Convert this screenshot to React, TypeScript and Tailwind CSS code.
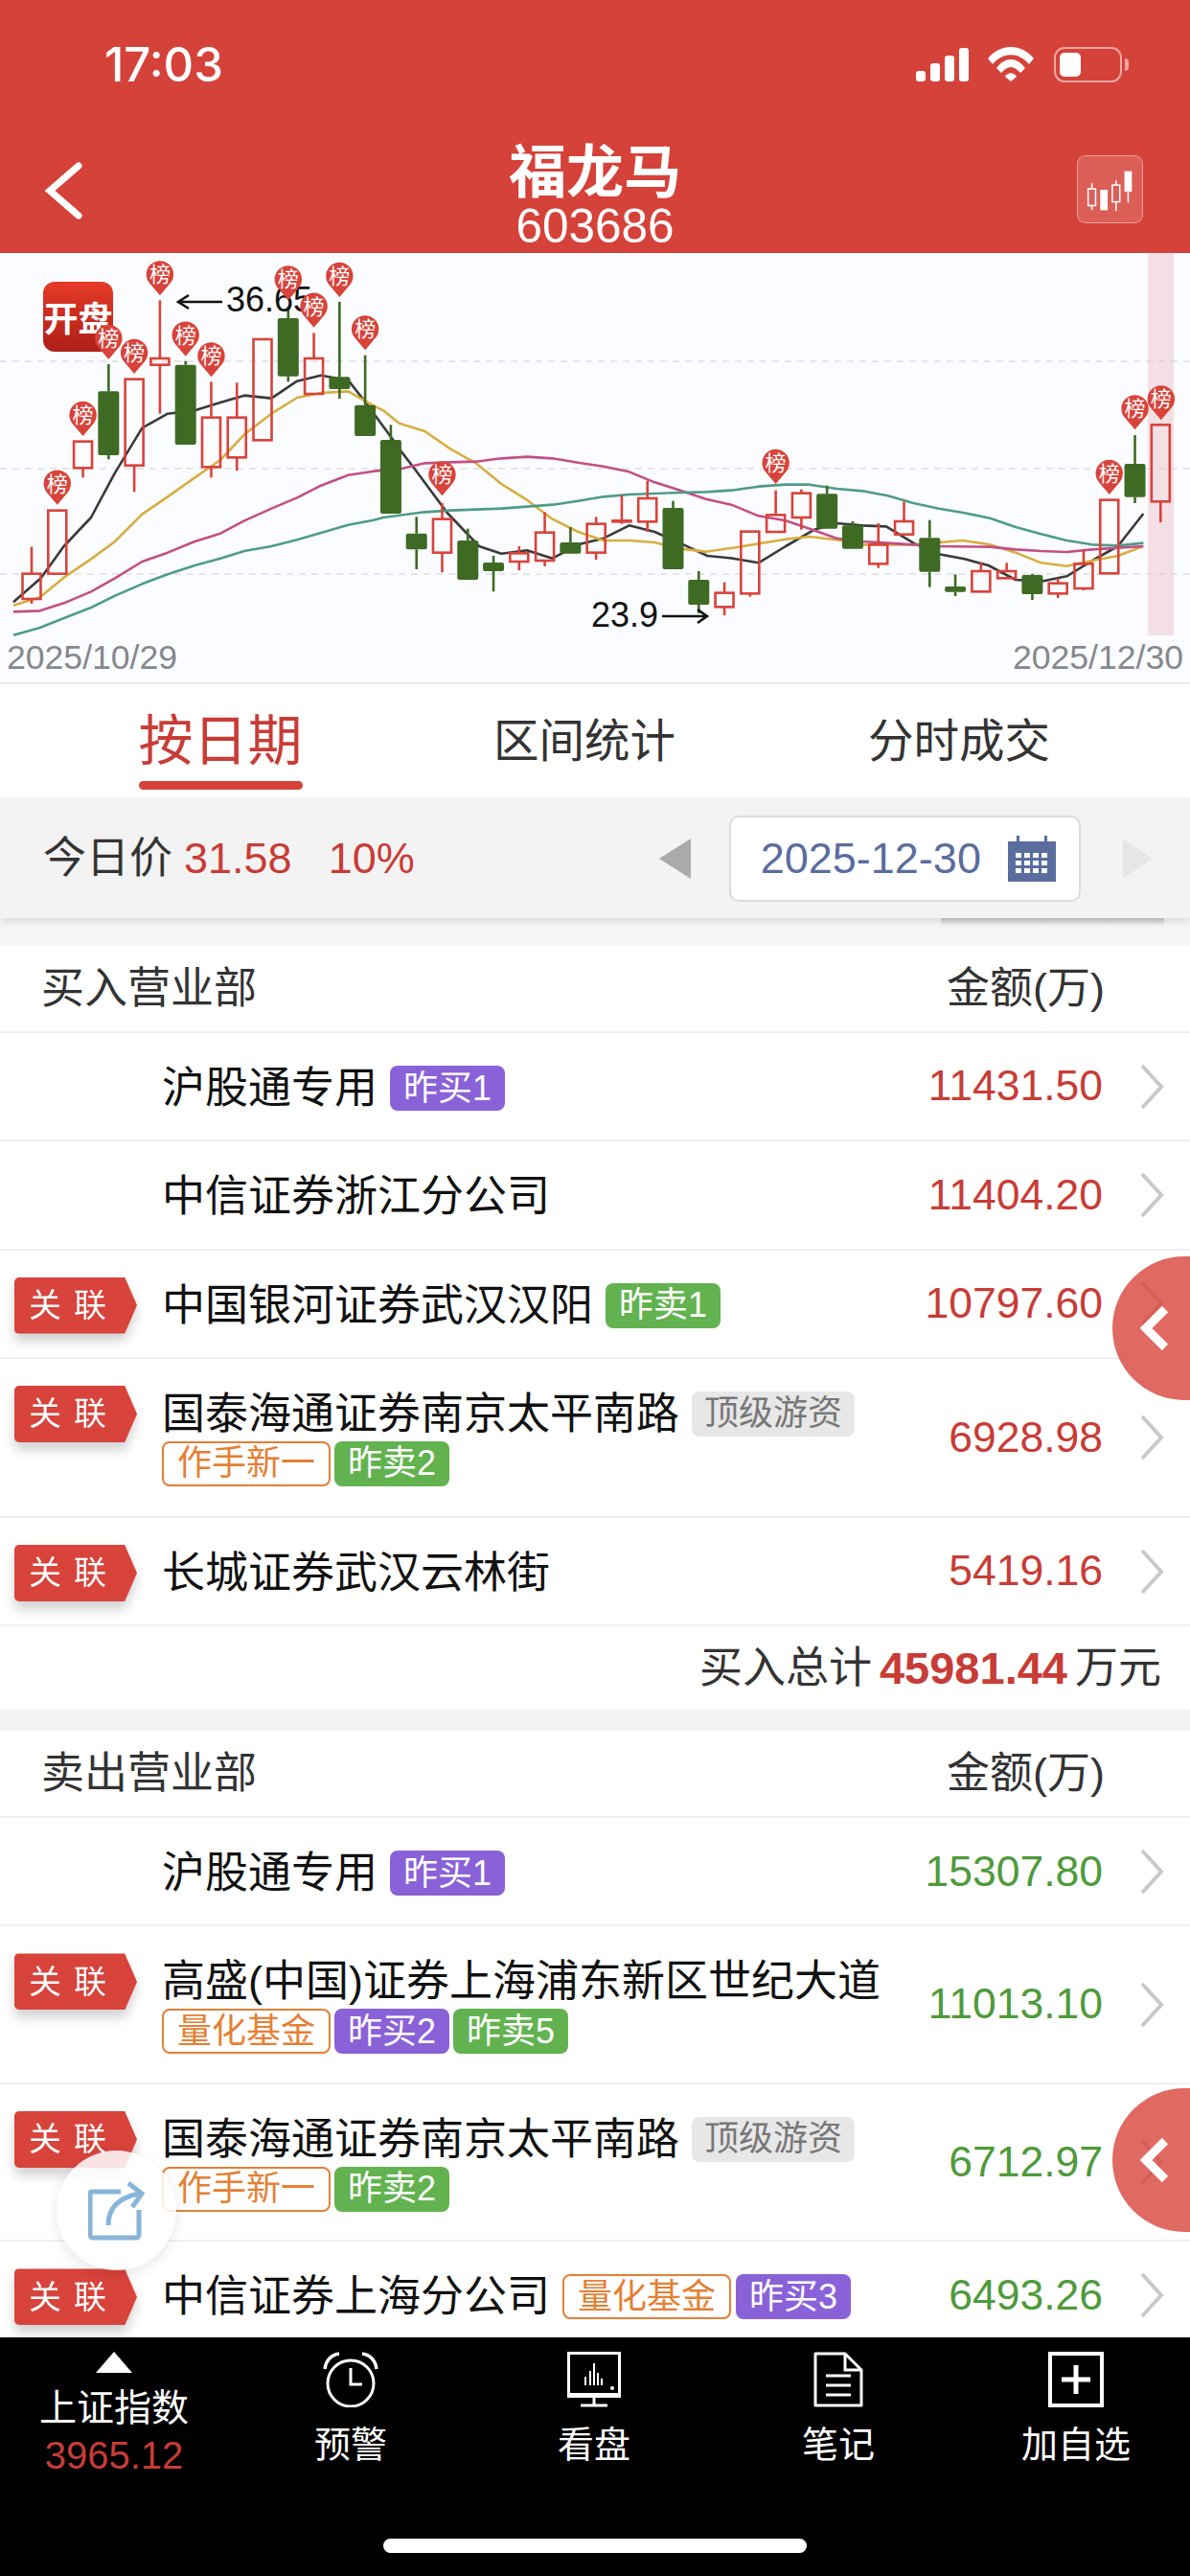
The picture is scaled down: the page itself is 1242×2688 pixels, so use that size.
const RED = "#d8433b";
const GREEN = "#3e6a24";

type Pt = [number, number];
// readings were taken from 3x crops, so x0 is the crop's left edge
const toPts = (x0: number, pts: Pt[]) => pts.map(([x, y]) => `${x0 + x / 3},${260 + y / 3}`).join(" ");

const lines: { color: string; parts: [number, Pt[]][] }[] = [
  {
    color: "#3a3a3a",
    parts: [
      [0, [[42, 1105], [128, 1030], [200, 930], [285, 840], [360, 700], [445, 560], [525, 515], [610, 505], [690, 480], [765, 458], [850, 467], [930, 413], [1005, 395], [1090, 410], [1145, 480], [1222, 585]]],
      [400, [[50, 625], [100, 690], [200, 825], [300, 930], [370, 953], [450, 943], [530, 968], [610, 925], [690, 905], [770, 865], [850, 885], [940, 925], [1015, 960], [1095, 968], [1175, 982]]],
      [820, [[0, 930], [90, 878], [160, 858], [240, 865], [315, 868], [400, 920], [480, 955], [560, 970], [635, 990], [720, 1035], [800, 1040], [880, 1024], [960, 975], [1040, 930], [1120, 828]]],
    ],
  },
  {
    color: "#d7ae3f",
    parts: [
      [0, [[42, 1115], [125, 1090], [200, 1028], [285, 970], [360, 915], [445, 830], [525, 775], [610, 715], [690, 660], [765, 580], [850, 515], [930, 465], [1005, 450], [1090, 445], [1170, 490]]],
      [400, [[0, 505], [50, 545], [130, 570], [210, 625], [290, 670], [370, 735], [450, 785], [530, 845], [610, 885], [690, 912], [770, 912], [850, 918], [930, 938], [1010, 947], [1095, 935], [1175, 922]]],
      [820, [[0, 908], [75, 900], [160, 910], [240, 925], [400, 925], [480, 918], [555, 912], [640, 925], [720, 950], [800, 982], [880, 992], [960, 975], [1040, 960], [1120, 930]]],
    ],
  },
  {
    color: "#c24f86",
    parts: [
      [0, [[42, 1135], [125, 1132], [200, 1108], [285, 1072], [360, 1030], [445, 978], [525, 950], [610, 915], [690, 890], [765, 850], [850, 812], [930, 778], [1005, 740], [1090, 707], [1170, 695]]],
      [400, [[55, 688], [130, 670], [210, 667], [290, 665], [370, 655], [450, 650], [530, 655], [610, 668], [690, 680], [770, 697], [850, 730], [930, 755], [1010, 782], [1090, 800], [1175, 835]]],
      [820, [[0, 850], [75, 875], [160, 905], [240, 915], [320, 920], [400, 925], [480, 930], [640, 932], [720, 940], [800, 945], [880, 948], [960, 940], [1040, 935], [1120, 930]]],
    ],
  },
  {
    color: "#4f9c88",
    parts: [
      [0, [[42, 1208], [125, 1185], [200, 1155], [285, 1122], [360, 1085], [445, 1048], [525, 1018], [610, 990], [690, 968], [765, 945], [850, 930], [930, 910], [1005, 888], [1090, 863], [1170, 848]]],
      [400, [[0, 840], [130, 823], [210, 818], [290, 815], [370, 812], [450, 806], [530, 800], [610, 788], [690, 775], [770, 768], [850, 765], [930, 762], [1010, 760], [1090, 755], [1175, 743]]],
      [820, [[0, 737], [75, 737], [160, 750], [240, 757], [320, 772], [400, 795], [480, 812], [560, 826], [640, 842], [720, 870], [800, 892], [880, 912], [960, 925], [1040, 928], [1120, 920]]],
    ],
  },
];

// up, bodyTop, bodyBottom, wickTop, wickBottom in crop units
const candles: [0 | 1, number, number, number, number][] = [
  [1, 1016, 1095, 932, 1110], [1, 818, 1016, 818, 1016], [1, 602, 685, 602, 715], [0, 445, 645, 360, 658],
  [1, 407, 677, 407, 760], [1, 342, 362, 160, 515], [0, 362, 612, 350, 612], [1, 527, 682, 415, 715],
  [1, 527, 652, 418, 693], [1, 282, 598, 282, 598], [0, 216, 398, 180, 415], [1, 342, 453, 262, 453],
  [0, 400, 438, 165, 468], [0, 488, 585, 332, 585], [0, 597, 828, 550, 828], [0, 890, 940, 838, 1002],
  [1, 845, 950, 795, 1012], [0, 912, 1035, 875, 1035], [0, 981, 1008, 960, 1072], [1, 952, 978, 930, 1005],
  [1, 887, 975, 823, 993], [0, 918, 953, 870, 953], [1, 860, 950, 838, 972], [1, 850, 853, 770, 860],
  [1, 780, 853, 725, 885], [0, 810, 1002, 788, 1002], [0, 1035, 1113, 1008, 1140], [1, 1076, 1120, 1043, 1146],
  [1, 884, 1078, 884, 1088], [1, 832, 885, 755, 885], [1, 764, 840, 752, 878], [0, 766, 875, 740, 875],
  [0, 865, 938, 852, 938], [1, 925, 985, 858, 998], [1, 852, 893, 790, 893], [0, 904, 1010, 848, 1058],
  [0, 1056, 1073, 1018, 1086], [1, 1008, 1072, 980, 1072], [1, 1008, 1030, 982, 1030], [0, 1020, 1080, 1016, 1098],
  [1, 1046, 1078, 1030, 1092], [1, 985, 1062, 940, 1068], [1, 785, 1015, 785, 1015], [0, 672, 776, 582, 795],
  [1, 550, 790, 550, 855],
];

const markers: [number, number][] = [
  [1, 800], [2, 585], [3, 345], [4, 390], [5, 145], [6, 335], [7, 400], [10, 160], [11, 245], [12, 150],
  [13, 316], [16, 772], [29, 735], [42, 768], [43, 565], [44, 535],
];

const cx = (i: number) => 33 + i * 26.78;
const cy = (z: number) => 260 + z / 3;

function KChart() {
  return (
    <svg viewBox="0 264 1242 448" className="block w-full h-[448px] bg-[#fbfcff]">
      <rect x="1198" y="264" width="27" height="399" fill="#f3dfe4" />
      {[377, 489, 599].map((y) => (
        <line key={y} x1="0" x2="1242" y1={y} y2={y} stroke="#cfd0d2" strokeWidth="1.2" strokeDasharray="7 6" />
      ))}
      {lines.map((l) => (
        <polyline
          key={l.color}
          points={l.parts.map(([x0, pts]) => toPts(x0, pts)).join(" ")}
          fill="none"
          stroke={l.color}
          strokeWidth="2.6"
          strokeLinejoin="round"
        />
      ))}
      {candles.map(([up, top, bottom, wickTop, wickBottom], i) => {
        const x = cx(i);
        const color = up ? RED : GREEN;
        return (
          <g key={i}>
            <line x1={x} x2={x} y1={cy(wickTop)} y2={cy(top)} stroke={color} strokeWidth="2.6" />
            <line x1={x} x2={x} y1={cy(bottom)} y2={cy(wickBottom)} stroke={color} strokeWidth="2.6" />
            {up ? (
              <rect x={x - 9.5} y={cy(top)} width="19" height={Math.max(cy(bottom) - cy(top), 1)} fill="none" stroke={color} strokeWidth="2.6" />
            ) : (
              <rect x={x - 11} y={cy(top)} width="22" height={cy(bottom) - cy(top)} rx="2" fill={color} />
            )}
          </g>
        );
      })}
      <defs>
        <linearGradient id="kaipan" x1="0" y1="0" x2="0" y2="1">
          <stop offset="0" stopColor="#e63a27" />
          <stop offset="1" stopColor="#ad1f18" />
        </linearGradient>
      </defs>
      <rect x="45" y="294" width="73" height="73" rx="12" fill="url(#kaipan)" />
      <text x="81.5" y="346" textAnchor="middle" fontSize="36" fontWeight="700" fill="#fff" fontFamily="'Noto Sans CJK SC',sans-serif">
        开盘
      </text>
      <text x="236" y="325" fontSize="36" fill="#111" fontFamily="'Liberation Sans',sans-serif">36.65</text>
      <path d="M232 315H186M197 308l-11 7 11 7" fill="none" stroke="#111" strokeWidth="2.6" />
      <text x="617" y="654" fontSize="36" fill="#111" fontFamily="'Liberation Sans',sans-serif">23.9</text>
      <path d="M691 643H738M728 636l10 7-10 7" fill="none" stroke="#111" strokeWidth="2.6" />
      {markers.map(([i, tip]) => {
        const x = cx(i) + (i === 44 ? 0.5 : 0);
        const y = cy(tip);
        return (
          <g key={i}>
            <path d={`M${x} ${y}L${x - 11} ${y - 13}A14.2 14.2 0 1 1 ${x + 11} ${y - 13}Z`} fill={RED} />
            <text x={x} y={y - 14} textAnchor="middle" fontSize="22" fill="#fff" fontFamily="'Noto Sans CJK SC',sans-serif">
              榜
            </text>
          </g>
        );
      })}
      <text x="7" y="698" fontSize="35.6" fill="#85888c" fontFamily="'Liberation Sans',sans-serif">2025/10/29</text>
      <text x="1235" y="698" textAnchor="end" fontSize="35.6" fill="#85888c" fontFamily="'Liberation Sans',sans-serif">2025/12/30</text>
    </svg>
  );
}

function StatusIcons() {
  return (
    <div className="flex items-center">
      <svg width="56" height="35" viewBox="0 0 56 35" fill="#fff">
        <rect x="0" y="24" width="10" height="11" rx="3" />
        <rect x="15" y="16" width="10" height="19" rx="3" />
        <rect x="30" y="8" width="10" height="27" rx="3" />
        <rect x="45" y="0" width="10" height="35" rx="3" />
      </svg>
      <svg width="48" height="36" viewBox="0 0 48 36" fill="#fff" className="ml-[19px]">
        <path d="M0 12C13-4 35-4 48 12L43 18C32 5 16 5 5 18Z" />
        <path d="M9 22C18 10 30 10 39 22L34 27C27 19 21 19 14 27Z" />
        <path d="M18 31C21 26 27 26 30 31L24 36Z" />
      </svg>
      <div className="ml-[21px] flex items-center">
        <div className="w-[71px] h-[37px] rounded-[11px] border-2 border-[#f0a8a3] p-[4px]">
          <div className="w-[22px] h-full rounded-[5px] bg-white" />
        </div>
        <div className="ml-[3px] w-[4px] h-[13px] rounded-r-full bg-[#f0a8a3]" />
      </div>
    </div>
  );
}

function CandleIcon() {
  return (
    <svg width="69" height="71" viewBox="0 0 69 71" className="bg-white/15 rounded-[9px] border border-white/40">
      <g stroke="#fff" strokeWidth="1.6" fill="none">
        <path d="M15 29V35M15 53V58M41 26V31M41 49V59M54 20V38M54 38V50" />
        <rect x="11" y="35" width="8" height="18" />
        <rect x="37" y="31" width="8" height="18" />
      </g>
      <rect x="24" y="36" width="8" height="22" fill="#fff" />
      <rect x="50" y="16" width="8" height="22" fill="#fff" />
    </svg>
  );
}

type Tag = { text: string; kind: "purple" | "green" | "gray" | "orange" };

const tagClass = {
  purple: "bg-[#8a62d8] text-white px-[14px]",
  green: "bg-[#62b350] text-white px-[14px]",
  gray: "bg-[#e7e7e7] text-[#777] px-[13px]",
  orange: "border-2 border-[#e57f34] text-[#e57f34] px-[14px]",
};

function Chip({ text, kind }: Tag) {
  return (
    <span className={`inline-flex items-center justify-center h-[47px] rounded-[8px] text-[36px] leading-none whitespace-nowrap shrink-0 ${tagClass[kind]}`}>
      {text}
    </span>
  );
}

function GuanlianBadge() {
  return (
    <div className="drop-shadow-[0_8px_6px_rgba(0,0,0,0.18)]">
      <div className="flex items-center gap-[13px] w-[128px] h-[59px] pl-[15px] bg-[#d8433b] rounded-l-[5px] text-white text-[34px] leading-none [clip-path:polygon(0_0,90%_0,100%_50%,90%_100%,0_100%)]">
        <span>关</span>
        <span>联</span>
      </div>
    </div>
  );
}

type Row = { name: string; linked?: boolean; first?: Tag[]; second?: Tag[]; amount: string };

function ListRow({ row, color, dense }: { row: Row; color: string; dense?: boolean }) {
  const height = !row.second ? "h-[113.3px]" : dense ? "h-[164.5px]" : "h-[166px]";
  return (
    <div className={`flex border-b-2 border-[#f0f0f0] bg-white ${height}`}>
      <div className="w-[169px] shrink-0 pl-[15px] pt-[28px]">{row.linked && <GuanlianBadge />}</div>
      <div className="flex-1 min-w-0 pt-[29px]">
        <div className="flex items-center h-[57px]">
          <span className="text-[45px] leading-none text-[#111] whitespace-nowrap">{row.name}</span>
          {row.first && (
            <div className="flex gap-[5px] ml-[13px]">
              {row.first.map((t) => (
                <Chip key={t.text} {...t} />
              ))}
            </div>
          )}
        </div>
        {row.second && (
          <div className="flex gap-[4px]">
            {row.second.map((t) => (
              <Chip key={t.text} {...t} />
            ))}
          </div>
        )}
      </div>
      <div className="self-center text-[44.5px] leading-none" style={{ color }}>
        {row.amount}
      </div>
      <svg width="26" height="48" viewBox="0 0 26 48" className="self-center ml-[38px] mr-[27px] shrink-0" fill="none" stroke="#c9c9c9" strokeWidth="4">
        <path d="M3 2L23 24L3 46" />
      </svg>
    </div>
  );
}

const buyRows: Row[] = [
  { name: "沪股通专用", first: [{ text: "昨买1", kind: "purple" }], amount: "11431.50" },
  { name: "中信证券浙江分公司", amount: "11404.20" },
  { name: "中国银河证券武汉汉阳", linked: true, first: [{ text: "昨卖1", kind: "green" }], amount: "10797.60" },
  {
    name: "国泰海通证券南京太平南路",
    linked: true,
    first: [{ text: "顶级游资", kind: "gray" }],
    second: [{ text: "作手新一", kind: "orange" }, { text: "昨卖2", kind: "green" }],
    amount: "6928.98",
  },
  { name: "长城证券武汉云林街", linked: true, amount: "5419.16" },
];

const sellRows: Row[] = [
  { name: "沪股通专用", first: [{ text: "昨买1", kind: "purple" }], amount: "15307.80" },
  {
    name: "高盛(中国)证券上海浦东新区世纪大道",
    linked: true,
    second: [{ text: "量化基金", kind: "orange" }, { text: "昨买2", kind: "purple" }, { text: "昨卖5", kind: "green" }],
    amount: "11013.10",
  },
  {
    name: "国泰海通证券南京太平南路",
    linked: true,
    first: [{ text: "顶级游资", kind: "gray" }],
    second: [{ text: "作手新一", kind: "orange" }, { text: "昨卖2", kind: "green" }],
    amount: "6712.97",
  },
  {
    name: "中信证券上海分公司",
    linked: true,
    first: [{ text: "量化基金", kind: "orange" }, { text: "昨买3", kind: "purple" }],
    amount: "6493.26",
  },
];

function SectionHead({ title }: { title: string }) {
  return (
    <div className="flex items-center justify-between h-[91px] pl-[43px] pr-[89px] bg-white border-b-2 border-[#f0f0f0] text-[45px] leading-none text-[#333]">
      <span>{title}</span>
      <span>金额(万)</span>
    </div>
  );
}

function SideTab({ className }: { className: string }) {
  return (
    <div className={`absolute right-0 w-[81px] h-[150px] rounded-l-full bg-[#d8433b]/80 flex items-center ${className}`}>
      <svg width="32" height="46" viewBox="0 0 32 46" className="ml-[27px]" fill="none" stroke="#fff" strokeWidth="9">
        <path d="M28 3L8 23L28 43" />
      </svg>
    </div>
  );
}

function AlarmIcon() {
  return (
    <svg width="58" height="58" viewBox="0 0 58 58" fill="none" stroke="#fff" strokeWidth="3">
      <circle cx="29" cy="33" r="24" />
      <path d="M29 17V34H41" />
      <path d="M2 18C3 9 9 3 17 2M56 18C55 9 49 3 41 2" strokeWidth="3.5" />
    </svg>
  );
}

function ScreenIcon() {
  return (
    <svg width="56" height="58" viewBox="0 0 56 58" fill="none" stroke="#fff">
      <rect x="1.5" y="1.5" width="53" height="44" strokeWidth="3" />
      <path d="M0 43H56V48H0Z" fill="#fff" stroke="none" />
      <path d="M28 48V55M14 56H42" strokeWidth="3" />
      <path d="M19 35V26M24 35V20M28 35V12M32 35V22M36 35V28" strokeWidth="2" />
      <circle cx="47" cy="38" r="2" fill="#fff" stroke="none" />
    </svg>
  );
}

function NoteIcon() {
  return (
    <svg width="52" height="58" viewBox="0 0 52 58" fill="none" stroke="#fff" strokeWidth="3">
      <path d="M2 2H33L50 19V56H2Z" strokeLinejoin="round" />
      <path d="M33 2V19H50" />
      <path d="M13 25H39M13 35H39M13 45H39" />
    </svg>
  );
}

function PlusIcon() {
  return (
    <svg width="58" height="58" viewBox="0 0 58 58" fill="none" stroke="#fff">
      <rect x="2" y="2" width="54" height="54" strokeWidth="4" />
      <path d="M29 14V44M14 29H44" strokeWidth="5" />
    </svg>
  );
}

const tools = [
  { label: "预警", left: "ml-[130px]", width: "w-[78px]", icon: <AlarmIcon /> },
  { label: "看盘", left: "ml-[176px]", width: "w-[78px]", icon: <ScreenIcon /> },
  { label: "笔记", left: "ml-[177px]", width: "w-[78px]", icon: <NoteIcon /> },
  { label: "加自选", left: "ml-[152px]", width: "w-[114px]", icon: <PlusIcon /> },
];

export default function App() {
  return (
    <div className="relative flex flex-col w-[1242px] h-[2688px] overflow-hidden bg-white font-['Liberation_Sans','Noto_Sans_CJK_SC',sans-serif]">
      {/* header */}
      <div className="h-[264px] shrink-0 bg-[#d5423a] text-white">
        <div className="flex items-center justify-between h-[136px] pl-[109px] pr-[64px] pb-[2px]">
          <span className="font-['Inter',sans-serif] text-[49px] leading-none font-medium">17:03</span>
          <StatusIcons />
        </div>
        <div className="grid grid-cols-[1fr_auto_1fr] items-start">
          <svg width="44" height="60" viewBox="0 0 44 60" className="ml-[46px] mt-[33px]" fill="none" stroke="#fff" strokeWidth="7" strokeLinecap="round">
            <path d="M36 4L6 30L36 56" />
          </svg>
          <div className="flex flex-col items-center pt-[12px]">
            <span className="text-[60px] leading-[66px] font-bold">福龙马</span>
            <span className="text-[49.5px] leading-[50px] mt-[-3px] font-normal">603686</span>
          </div>
          <div className="justify-self-end mr-[49px] mt-[26px]">
            <CandleIcon />
          </div>
        </div>
      </div>

      <KChart />

      {/* tabs */}
      <div className="h-[121px] shrink-0 pl-[37px] grid grid-cols-[386px_374px_408px] border-t-2 border-[#ececec] text-[47.5px] leading-none text-[#333]">
        <div className="relative flex items-center justify-center text-[#c93c36] text-[57px]">
          按日期
          <div className="absolute bottom-[9px] left-[108px] w-[171px] h-[9px] rounded-full bg-[#d5423a]" />
        </div>
        <div className="flex items-center justify-center">区间统计</div>
        <div className="flex items-center justify-center">分时成交</div>
      </div>

      {/* price bar */}
      <div className="relative z-10 flex items-center h-[125px] shrink-0 pl-[45px] bg-[#f3f3f3] shadow-[0_3px_8px_rgba(0,0,0,0.12)] text-[45px] leading-none">
        <span className="text-[#333]">今日价</span>
        <span className="ml-[12px] text-[#c83c36]">31.58</span>
        <span className="ml-[38px] text-[#c83c36]">10%</span>
        <svg width="33" height="42" viewBox="0 0 33 42" className="ml-[255px]" fill="#aaaaaa">
          <path d="M0 21L33 0V42Z" />
        </svg>
        <div className="ml-[40px] flex items-center w-[367px] h-[90px] pl-[31px] rounded-[10px] bg-white border-2 border-[#dcdcdc] text-[45px] text-[#5a6d9e]">
          <span>2025-12-30</span>
          <svg width="50" height="48" viewBox="0 0 50 48" className="ml-[28px]" fill="#5a6d9e">
            <path d="M0 6H9V0H12V6H38V0H41V6H50V48H0Z" />
            <g fill="#fff">
              {[18, 26, 34].flatMap((y) =>
                [8, 17, 26, 35].map((x) => <rect key={`${x}-${y}`} x={x} y={y} width="6" height="5" />),
              )}
            </g>
          </svg>
        </div>
        <svg width="31" height="42" viewBox="0 0 31 42" className="ml-[44px]" fill="#e6e6e6">
          <path d="M31 21L0 0V42Z" />
        </svg>
      </div>

      {/* list */}
      <div className="flex-1 min-h-0 overflow-hidden">
        <div className="h-[29px] bg-[#f5f5f5]">
          <div className="ml-[982px] w-[233px] h-[8px] bg-gradient-to-b from-[#c8c8c8] to-[#f5f5f5]" />
        </div>
        <SectionHead title="买入营业部" />
        {buyRows.map((r) => (
          <ListRow key={r.amount} row={r} color="#c83c36" />
        ))}
        <div className="flex items-center justify-end h-[87px] pr-[30px] bg-white text-[45px] leading-none text-[#333]">
          <span>买入总计</span>
          <span className="ml-[8px] text-[47px] font-bold text-[#c83c36]">45981.44</span>
          <span className="ml-[8px]">万元</span>
        </div>
        <div className="h-[22px] bg-[#f2f2f2]" />
        <SectionHead title="卖出营业部" />
        {sellRows.map((r) => (
          <ListRow key={r.amount} row={r} color="#4f9a3c" dense />
        ))}
      </div>

      {/* bottom bar */}
      <div className="relative h-[249px] shrink-0 bg-black text-white">
        <div className="flex items-start pt-[15px]">
          <div className="ml-[41px] w-[156px] flex flex-col items-center shrink-0">
            <div className="w-0 h-0 border-l-[19px] border-r-[19px] border-b-[22px] border-l-transparent border-r-transparent border-b-white" />
            <span className="text-[39px] leading-none mt-[17px]">上证指数</span>
            <span className="text-[40px] leading-none mt-[10px] text-[#c63c36]">3965.12</span>
          </div>
          {tools.map((t) => (
            <div key={t.label} className={`flex flex-col items-center shrink-0 ${t.left} ${t.width}`}>
              {t.icon}
              <span className="text-[38px] leading-none mt-[20px] whitespace-nowrap">{t.label}</span>
            </div>
          ))}
        </div>
        <div className="absolute left-[400px] bottom-[24px] w-[442px] h-[15px] rounded-full bg-white" />
      </div>

      {/* floating buttons */}
      <SideTab className="top-[1311px]" />
      <SideTab className="top-[2179px]" />
      <div className="absolute left-[59px] top-[2244px] w-[125px] h-[125px] rounded-full bg-white/85 shadow-[0_4px_14px_rgba(0,0,0,0.1)] flex items-center justify-center">
        <svg width="60" height="62" viewBox="0 0 60 62" fill="none" stroke="#87b5d8" strokeWidth="5">
          <path d="M34 11H4a2 2 0 0 0-2 2V56a3 3 0 0 0 3 3H50a3 3 0 0 0 3-3V30" />
          <path d="M21 46C21 30 30 17 54 13" strokeWidth="5" />
          <path d="M42 2L56 13L46 27" strokeWidth="5" />
        </svg>
      </div>
    </div>
  );
}
